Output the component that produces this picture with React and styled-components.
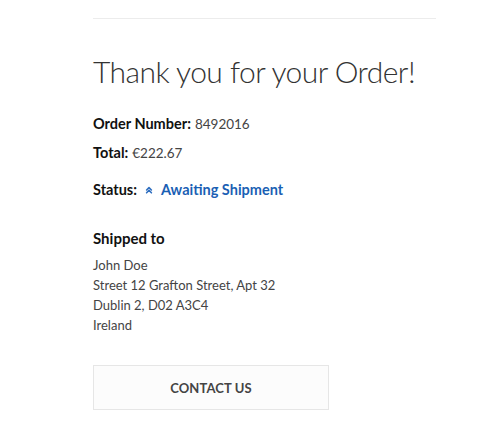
import React from "react";
import styled, { createGlobalStyle } from "styled-components";

const Global = createGlobalStyle`
  html, body { margin: 0; padding: 0; background: #fff; }
  body { font-family: Lato, "Open Sans", sans-serif; color: #333; }
`;

const Page = styled.div`
  width: 501px;
  height: 439px;
  padding: 0 65px 0 93px;
  box-sizing: border-box;
  overflow: hidden;
`;

const Divider = styled.hr`
  margin: 18px 0 0;
  border: 0;
  border-top: 1px solid #ececec;
`;

const Title = styled.h1`
  margin: 32px 0 0;
  font-size: 30px;
  font-weight: 300;
  line-height: 40px;
  letter-spacing: -0.55px;
  color: #333;
  white-space: nowrap;
`;

const Line = styled.div`
  display: flex;
  align-items: center;
  gap: 4px;
  margin-top: ${(p) => p.$mt}px;
  font-size: 13.5px;
  line-height: 20px;
  color: #444;
`;

const Label = styled.span`
  font-size: 14.5px;
  font-weight: 700;
  color: #111;
`;

const Status = styled.span`
  display: inline-flex;
  align-items: center;
  gap: 8px;
  margin-left: 4px;
  font-size: 14.5px;
  font-weight: 700;
  color: #1a5fb4;
`;

const Heading = styled.div`
  margin-top: 27px;
  font-size: 15px;
  font-weight: 700;
  line-height: 22px;
  color: #111;
`;

const Address = styled.div`
  margin-top: 6px;
  font-size: 13px;
  line-height: 20px;
  color: #444;
`;

const Button = styled.button`
  display: block;
  margin-top: 30px;
  width: 236px;
  height: 45px;
  background: #fcfcfc;
  border: 1px solid #e6e6e6;
  font-family: Lato, "Open Sans", sans-serif;
  font-size: 13px;
  font-weight: 700;
  letter-spacing: 0.1px;
  color: #444;
`;

const Chevrons = () => (
  <svg width="8" height="8" viewBox="0 0 10 10" fill="none" stroke="#2f6fc0" strokeWidth="2" strokeLinecap="round" strokeLinejoin="round">
    <path d="M2 5 L5 2 L8 5" />
    <path d="M2 8.5 L5 5.5 L8 8.5" />
  </svg>
);

export default function App() {
  return (
    <>
      <Global />
      <Page>
        <Divider />
        <Title>Thank you for your Order!</Title>
        <Line $mt={23}><Label>Order Number:</Label> 8492016</Line>
        <Line $mt={9}><Label>Total:</Label> €222.67</Line>
        <Line $mt={17}>
          <Label>Status:</Label>
          <Status><Chevrons />Awaiting Shipment</Status>
        </Line>
        <Heading>Shipped to</Heading>
        <Address>
          John Doe<br />
          Street 12 Grafton Street, Apt 32<br />
          Dublin 2, D02 A3C4<br />
          Ireland
        </Address>
        <Button>CONTACT US</Button>
      </Page>
    </>
  );
}
